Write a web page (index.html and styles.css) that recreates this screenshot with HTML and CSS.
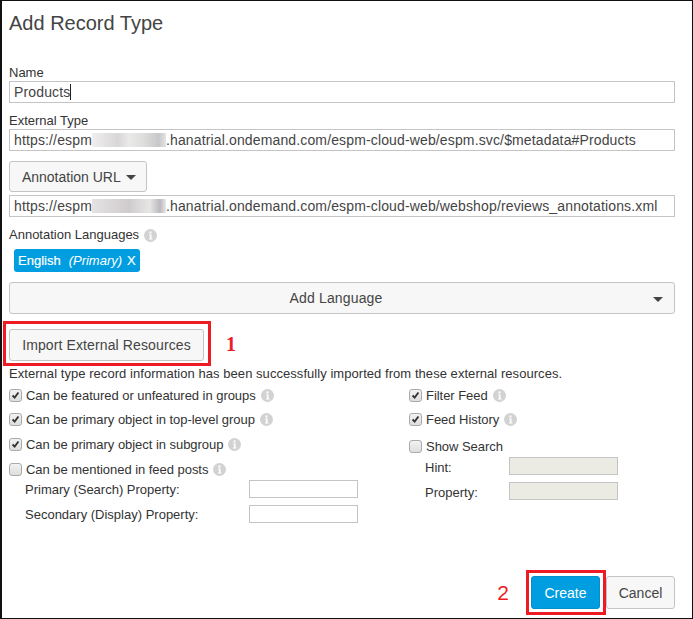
FILE: index.html
```html
<!DOCTYPE html>
<html lang="en">
<head>
    <meta charset="UTF-8">
    <meta name="viewport" content="width=device-width, initial-scale=1.0">
    <title>Add Record Type</title>
    <link rel="stylesheet" href="styles.css">
</head>
<body>
    <svg class="svg-defs" width="0" height="0">
        <symbol id="info" viewBox="0 0 13 13">
            <circle cx="6.5" cy="6.5" r="6.5" fill="#d2d2d2"/>
            <rect x="5.5" y="2.5" width="2" height="2" fill="#fff"/>
            <path d="M5 5.5h2.5v4h1v1h-3.5v-1h1v-3h-1z" fill="#fff"/>
        </symbol>
        <symbol id="tick" viewBox="0 0 13 13">
            <path d="M3 6.5l2.5 2.5 4.5-6" fill="none" stroke="#333" stroke-width="2.2"/>
        </symbol>
    </svg>

    <main class="dialog">
        <h1 class="title">Add Record Type</h1>

        <label class="field-label label-name">Name</label>
        <div class="field"><span>Products</span><span class="caret"></span></div>

        <label class="field-label label-type">External Type</label>
        <div class="field"><span>https://espm</span><span class="blur blur-a"></span><span>.hanatrial.ondemand.com/espm-cloud-web/espm.svc/$metadata#Products</span></div>

        <button class="btn btn-annotation" type="button">Annotation URL <span class="arrow"></span></button>
        <div class="field"><span>https://espm</span><span class="blur blur-b"></span><span>.hanatrial.ondemand.com/espm-cloud-web/webshop/reviews_annotations.xml</span></div>

        <div class="field-label label-lang">Annotation Languages <svg class="info"><use href="#info"/></svg></div>
        <div class="badge"><span>English</span><i>(Primary)</i><span>X</span></div>

        <button class="btn btn-wide" type="button">Add Language<span class="arrow arrow-right"></span></button>

        <div class="import-row">
            <div class="red-box red-import"><button class="btn btn-import" type="button">Import External Resources</button></div>
            <span class="step step-one">1</span>
        </div>

        <p class="note">External type record information has been successfully imported from these external resources.</p>

        <div class="options">
            <div class="col col-left">
                <div class="check"><span class="box"><svg><use href="#tick"/></svg></span>Can be featured or unfeatured in groups <svg class="info"><use href="#info"/></svg></div>
                <div class="check"><span class="box"><svg><use href="#tick"/></svg></span>Can be primary object in top-level group <svg class="info"><use href="#info"/></svg></div>
                <div class="check"><span class="box"><svg><use href="#tick"/></svg></span>Can be primary object in subgroup <svg class="info"><use href="#info"/></svg></div>
                <div class="check"><span class="box"></span>Can be mentioned in feed posts <svg class="info"><use href="#info"/></svg></div>
                <div class="prop prop-first"><span class="prop-name">Primary (Search) Property:</span><span class="prop-input"></span></div>
                <div class="prop"><span class="prop-name">Secondary (Display) Property:</span><span class="prop-input"></span></div>
            </div>
            <div class="col col-right">
                <div class="check"><span class="box"><svg><use href="#tick"/></svg></span>Filter Feed <svg class="info"><use href="#info"/></svg></div>
                <div class="check"><span class="box"><svg><use href="#tick"/></svg></span>Feed History <svg class="info"><use href="#info"/></svg></div>
                <div class="check check-search"><span class="box"></span>Show Search</div>
                <div class="prop prop-short prop-first"><span class="prop-name">Hint:</span><span class="prop-input disabled"></span></div>
                <div class="prop prop-short"><span class="prop-name">Property:</span><span class="prop-input disabled"></span></div>
            </div>
        </div>

        <div class="footer">
            <span class="step step-two">2</span>
            <div class="red-box red-create"><button class="btn btn-create" type="button">Create</button></div>
            <button class="btn btn-cancel" type="button">Cancel</button>
        </div>
    </main>
</body>
</html>
```

FILE: styles.css
```css
* {
    box-sizing: border-box;
}
html, body {
    margin: 0;
    padding: 0;
    background-color: #fff;
}
body {
    font-family: "Liberation Sans", Arial, sans-serif;
    font-size: 14px;
    color: #333;
    width: 693px;
    height: 619px;
    overflow: hidden;
}
.svg-defs {
    display: block;
    height: 0;
}
.dialog {
    width: 693px;
    height: 619px;
    border: solid #111;
    border-width: 1px 1px 1px 2px;
    padding: 0 17px 0 7px;
    display: flex;
    flex-direction: column;
}
.title {
    font-size: 20px;
    font-weight: normal;
    line-height: 22px;
    margin: 11px 0 0;
    color: #444;
}
.field-label {
    font-size: 13px;
    line-height: 16px;
}
.label-name {
    margin-top: 31px;
}
.label-type {
    margin-top: 10px;
}
.label-lang {
    margin-top: 10px;
    display: flex;
    align-items: center;
    gap: 5px;
}
.field {
    height: 22px;
    border: 1px solid #c4c4c4;
    padding-left: 4px;
    line-height: 21px;
    display: flex;
    white-space: nowrap;
    color: #444;
    font-size: 14px;
    letter-spacing: .14px;
}
.caret {
    width: 1px;
    height: 16px;
    margin-top: 2px;
    background-color: #222;
}
.blur {
    width: 74px;
    height: 14px;
    margin-top: 3px;
}
.blur-a {
    background: linear-gradient(90deg, #f0eeef 0, #e3e0e1 20%, #d8d6d7 35%, #ebe9ea 50%, #dddedb 70%, #c8c6ca 90%, #e4e4e4 100%);
}
.blur-b {
    background: linear-gradient(90deg, #e4e2e3 0, #d8d5d6 30%, #cfcbcd 50%, #dcdadb 65%, #e6e6e4 78%, #bdb8c0 92%, #e8e8e8 100%);
}
.btn {
    font-family: inherit;
    font-size: 14px;
    color: #444;
    background-color: #f7f7f7;
    border: 1px solid #c4c4c4;
    border-radius: 3px;
    padding: 0;
    cursor: pointer;
}
.btn-annotation {
    width: 138px;
    height: 31px;
    margin-top: 10px;
    margin-bottom: 3px;
    padding-left: 2px;
}
.arrow {
    display: inline-block;
    width: 0;
    height: 0;
    margin-left: 2px;
    vertical-align: 2px;
    border: 5px solid transparent;
    border-top: 5px solid #444;
    border-bottom: 0;
}
.badge {
    align-self: flex-start;
    margin: 6px 0 0 5px;
    width: 126px;
    height: 23px;
    padding: 0 4px;
    border-radius: 3px;
    background-color: #009de0;
    color: #fff;
    font-size: 13px;
    line-height: 23px;
    display: flex;
    -webkit-text-stroke: .2px #fff;
}
.badge i {
    margin: 0 5px 0 8px;
    -webkit-text-stroke: 0;
}
.btn-wide {
    position: relative;
    height: 32px;
    margin-top: 10px;
    width: 100%;
    padding-right: 12px;
    letter-spacing: .15px;
}
.arrow-right {
    position: absolute;
    right: 11px;
    top: 14px;
}
.import-row {
    display: flex;
    align-items: center;
    margin: 7px 0 0 -6px;
}
.red-box {
    border: 3px solid #ed1c24;
}
.red-import {
    width: 208px;
    height: 45px;
    padding: 5px 3px;
}
.btn-import {
    width: 195px;
    height: 32px;
    display: block;
    letter-spacing: .12px;
}
.step {
    color: #ed1c24;
    font-size: 20px;
    line-height: 24px;
}
.step-one {
    font-family: "Liberation Serif", serif;
    font-weight: bold;
    margin-left: 15px;
}
.note {
    margin: 0;
    font-size: 13px;
    line-height: 16px;
    letter-spacing: .05px;
}
.options {
    display: flex;
    margin-top: 1px;
}
.col {
    font-size: 13px;
}
.col-left {
    width: 400px;
}
.check {
    height: 24.6px;
    display: flex;
    align-items: center;
    gap: 3px;
    letter-spacing: -.04px;
}
.check .info {
    margin-left: 2px;
}
.box {
    width: 13px;
    height: 13px;
    margin-right: 1px;
    border: 1px solid #aaa;
    border-radius: 3px;
    background: linear-gradient(#f2f2f2, #dedede);
    flex: none;
}
.box svg {
    display: block;
    width: 11px;
    height: 11px;
}
.info {
    width: 13px;
    height: 13px;
    flex: none;
}
.prop {
    display: flex;
    align-items: center;
    height: 25px;
    padding-left: 16px;
}
.prop-first {
    margin-top: -5px;
}
.prop-name {
    width: 224px;
    padding-top: 2px;
}
.prop-input {
    width: 109px;
    height: 18px;
    border: 1px solid #c4c4c4;
    background-color: #fff;
}
.prop-short .prop-name {
    width: 84px;
}
.prop-input.disabled {
    background-color: #ebebe4;
}
.check-search {
    margin-top: 2px;
}
.footer {
    margin-top: auto;
    margin-bottom: 3px;
    display: flex;
    justify-content: flex-end;
    align-items: center;
    font-size: 14px;
}
.step-two {
    margin-right: 17px;
    font-size: 21px;
    font-family: "Liberation Sans", sans-serif;
}
.red-create {
    width: 80px;
    height: 45px;
    padding: 3px 2px;
}
.btn-create {
    display: block;
    width: 69px;
    height: 33px;
    color: #fff;
    background-color: #009de0;
    border-color: #0090cc;
}
.btn-cancel {
    width: 69px;
    height: 33px;
}
```
